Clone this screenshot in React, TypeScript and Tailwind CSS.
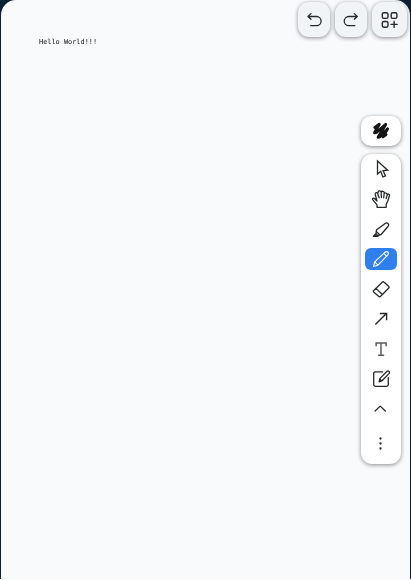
import type { ReactNode } from 'react';

function Icon({ children, width = 1.3 }: { children: ReactNode; width?: number }) {
  return (
    <svg className="h-5 w-5 shrink-0" viewBox="0 0 20 20" fill="none" stroke="currentColor" strokeWidth={width} strokeLinecap="round" strokeLinejoin="round">
      {children}
    </svg>
  );
}

const topButton = 'flex h-[35px] items-center justify-center rounded-[11px] bg-[#f1f4f7] shadow-[0_1px_4px_rgba(0,0,0,0.45)]';

function Tool({ label, active, children }: { label: string; active?: boolean; children: ReactNode }) {
  return (
    <button aria-label={label} className="flex h-[30px] w-10 shrink-0 items-center justify-center">
      <span className={active ? 'flex h-[22px] w-8 items-center justify-center rounded-[6px] bg-[#2f80ed] text-white' : 'flex'}>{children}</span>
    </button>
  );
}

export default function App() {
  return (
    <div className="h-[580px] w-[411px] overflow-hidden bg-[#f9fafc]">
      <div className="h-[579px] bg-[#0d1f35] pr-px pl-px">
        <main className="flex h-[580px] items-start justify-between rounded-t-[15px] bg-[#f9fafc] text-[#26282b]">
          <p className="mt-[37px] ml-[38px] translate-y-[0.2px] font-['DejaVu_Sans_Mono',monospace] text-[6.9px] leading-[10px] whitespace-pre text-black opacity-95 will-change-transform">Hello World!!!</p>
          <div className="flex flex-col items-end pt-[2px] pr-[3px]">
            <div className="flex gap-[5px]">
              <button aria-label="Undo" className={`${topButton} w-8`}>
                <Icon>
                  <path d="M7 3.6 4 6.5 7 9.3M4 6.5h8.5a4.6 4.6 0 0 1 0 9.2H6.7" />
                </Icon>
              </button>
              <button aria-label="Redo" className={`${topButton} w-8`}>
                <Icon>
                  <path d="m13.3 3.6 3 2.9-3 2.8M16.3 6.5H7.8a4.6 4.6 0 0 0 0 9.2h6" />
                </Icon>
              </button>
              <button aria-label="Library" className={`${topButton} w-[35px]`}>
                <Icon width={1.4}>
                  <rect x="2.3" y="2.7" width="5.7" height="5.7" rx="1.6" />
                  <rect x="11.2" y="2.7" width="5.7" height="5.7" rx="1.6" />
                  <rect x="2.3" y="11.5" width="5.7" height="5.7" rx="1.6" />
                  <path d="M14.1 11.4v6M11.1 14.4h6" />
                </Icon>
              </button>
            </div>
            <div className="mt-[79px] mr-[6px] flex h-[30px] w-10 items-center justify-center rounded-[10px] bg-white shadow-[0_1px_4px_rgba(0,0,0,0.45)]">
              <Icon width={2.9}>
                <path className="text-[#151515]" d="M3.8 6.4 8.3 3.3 3.5 11.8 5.5 11.3 14.7 3.4 7.1 16.2 8.6 16 16.6 7.8 12 15.9 15.1 13.6" />
              </Icon>
            </div>
            <div className="mt-2 mr-[6px] flex h-[310px] w-10 flex-col rounded-[11px] bg-white shadow-[0_1px_4px_rgba(0,0,0,0.45)]">
              <Tool label="Select">
                <Icon>
                  <path strokeLinejoin="miter" d="M6.5 2v13.1l3.2-2.8 2.2 5.7 2.6-1.1-2.4-5.4 4.6-.3Z" />
                </Icon>
              </Tool>
              <Tool label="Hand">
                <Icon>
                  <path d="M6 18.3h9.2v-3l1.5-3 1.8-5.7c.3-1.8-1.9-2.1-2.3-.6M6 18.3v-2.5L1.7 10.7c-.9-1.2.8-2.2 1.8-1.2L6 12 4.2 5.5c-.4-1.9 2-2.6 2.6-.8l1.3 4.1M6.8 4.5 7 3.3c.1-2 3-1.9 3.1 0l.3 5.2M10.1 3.2c.7-1.6 3.2-.9 3.1.8l-.5 4.8M13.2 4.2c1.5-.7 3 .2 3 1.8l-1 3.6" />
                </Icon>
              </Tool>
              <Tool label="Highlighter">
                <Icon>
                  <path d="m5.6 10.8 8.6-6.4c2-1.5 4.5.9 3 2.9l-7.1 8.2-1.5.3L5.3 12.4Z" />
                  <path d="m5.3 12.4-.2 2.1-2.6 2.8h4.4l1.7-1.5" />
                  <path fill="currentColor" strokeWidth={0.6} d="m4.9 14.7-2.4 2.6h4l.8-.8Z" />
                </Icon>
              </Tool>
              <Tool label="Draw" active>
                <Icon width={1.1}>
                  <path d="m2.5 17.5 1.2-4.7L14.1 3.2c2-1.6 4.3.7 2.7 2.6L7 16.2l-4.5 1.3ZM3.7 12.8 7 16.2M12.8 4.4l3 2.9" />
                </Icon>
              </Tool>
              <Tool label="Eraser">
                <Icon>
                  <path d="m2.5 11.7 8.7-8.5q1-1 2 0l4.4 4.1q1 1 0 2l-8 8q-1 1-2 0l-5-4.4q-.7-.6-.1-1.2ZM4.9 9.4l6.2 5.9" />
                </Icon>
              </Tool>
              <Tool label="Arrow">
                <Icon width={1.4}>
                  <path strokeLinecap="butt" strokeLinejoin="miter" d="M4.4 15.6 15.4 4.6M8.8 4.5h6.8v6.7" />
                </Icon>
              </Tool>
              <Tool label="Text">
                <span className="text-[#5a5c5f]">
                  <Icon width={1.5}>
                    <path strokeLinejoin="miter" d="M5.1 6.8V4h10v2.8M10 4v12.3M7.6 16.3h5" />
                  </Icon>
                </span>
              </Tool>
              <Tool label="Note">
                <Icon>
                  <path d="M11.7 2.8H4.4Q2.7 2.8 2.7 4.5v11.1q0 1.7 1.7 1.7h11.2q1.7 0 1.7-1.7V8.7M8.1 12.8l.9-3.4 7.1-7.1c1.4-1 3.2.8 2.1 2.1l-7.1 7.3-3 1.1Z" />
                  <path fill="currentColor" d="m8.4 12.4.6-2.2 1.5 1.5Z" />
                </Icon>
              </Tool>
              <Tool label="Collapse tools">
                <Icon>
                  <path d="m4.1 12 5.1-4.9 5.1 4.9" />
                </Icon>
              </Tool>
              <button aria-label="More tools" className="flex h-[39px] items-center justify-center">
                <svg className="h-5 w-5" viewBox="0 0 20 20" fill="currentColor">
                  <circle cx="9.5" cy="4.5" r="1.15" />
                  <circle cx="9.5" cy="9.5" r="1.15" />
                  <circle cx="9.5" cy="14.5" r="1.15" />
                </svg>
              </button>
            </div>
          </div>
        </main>
      </div>
    </div>
  );
}
